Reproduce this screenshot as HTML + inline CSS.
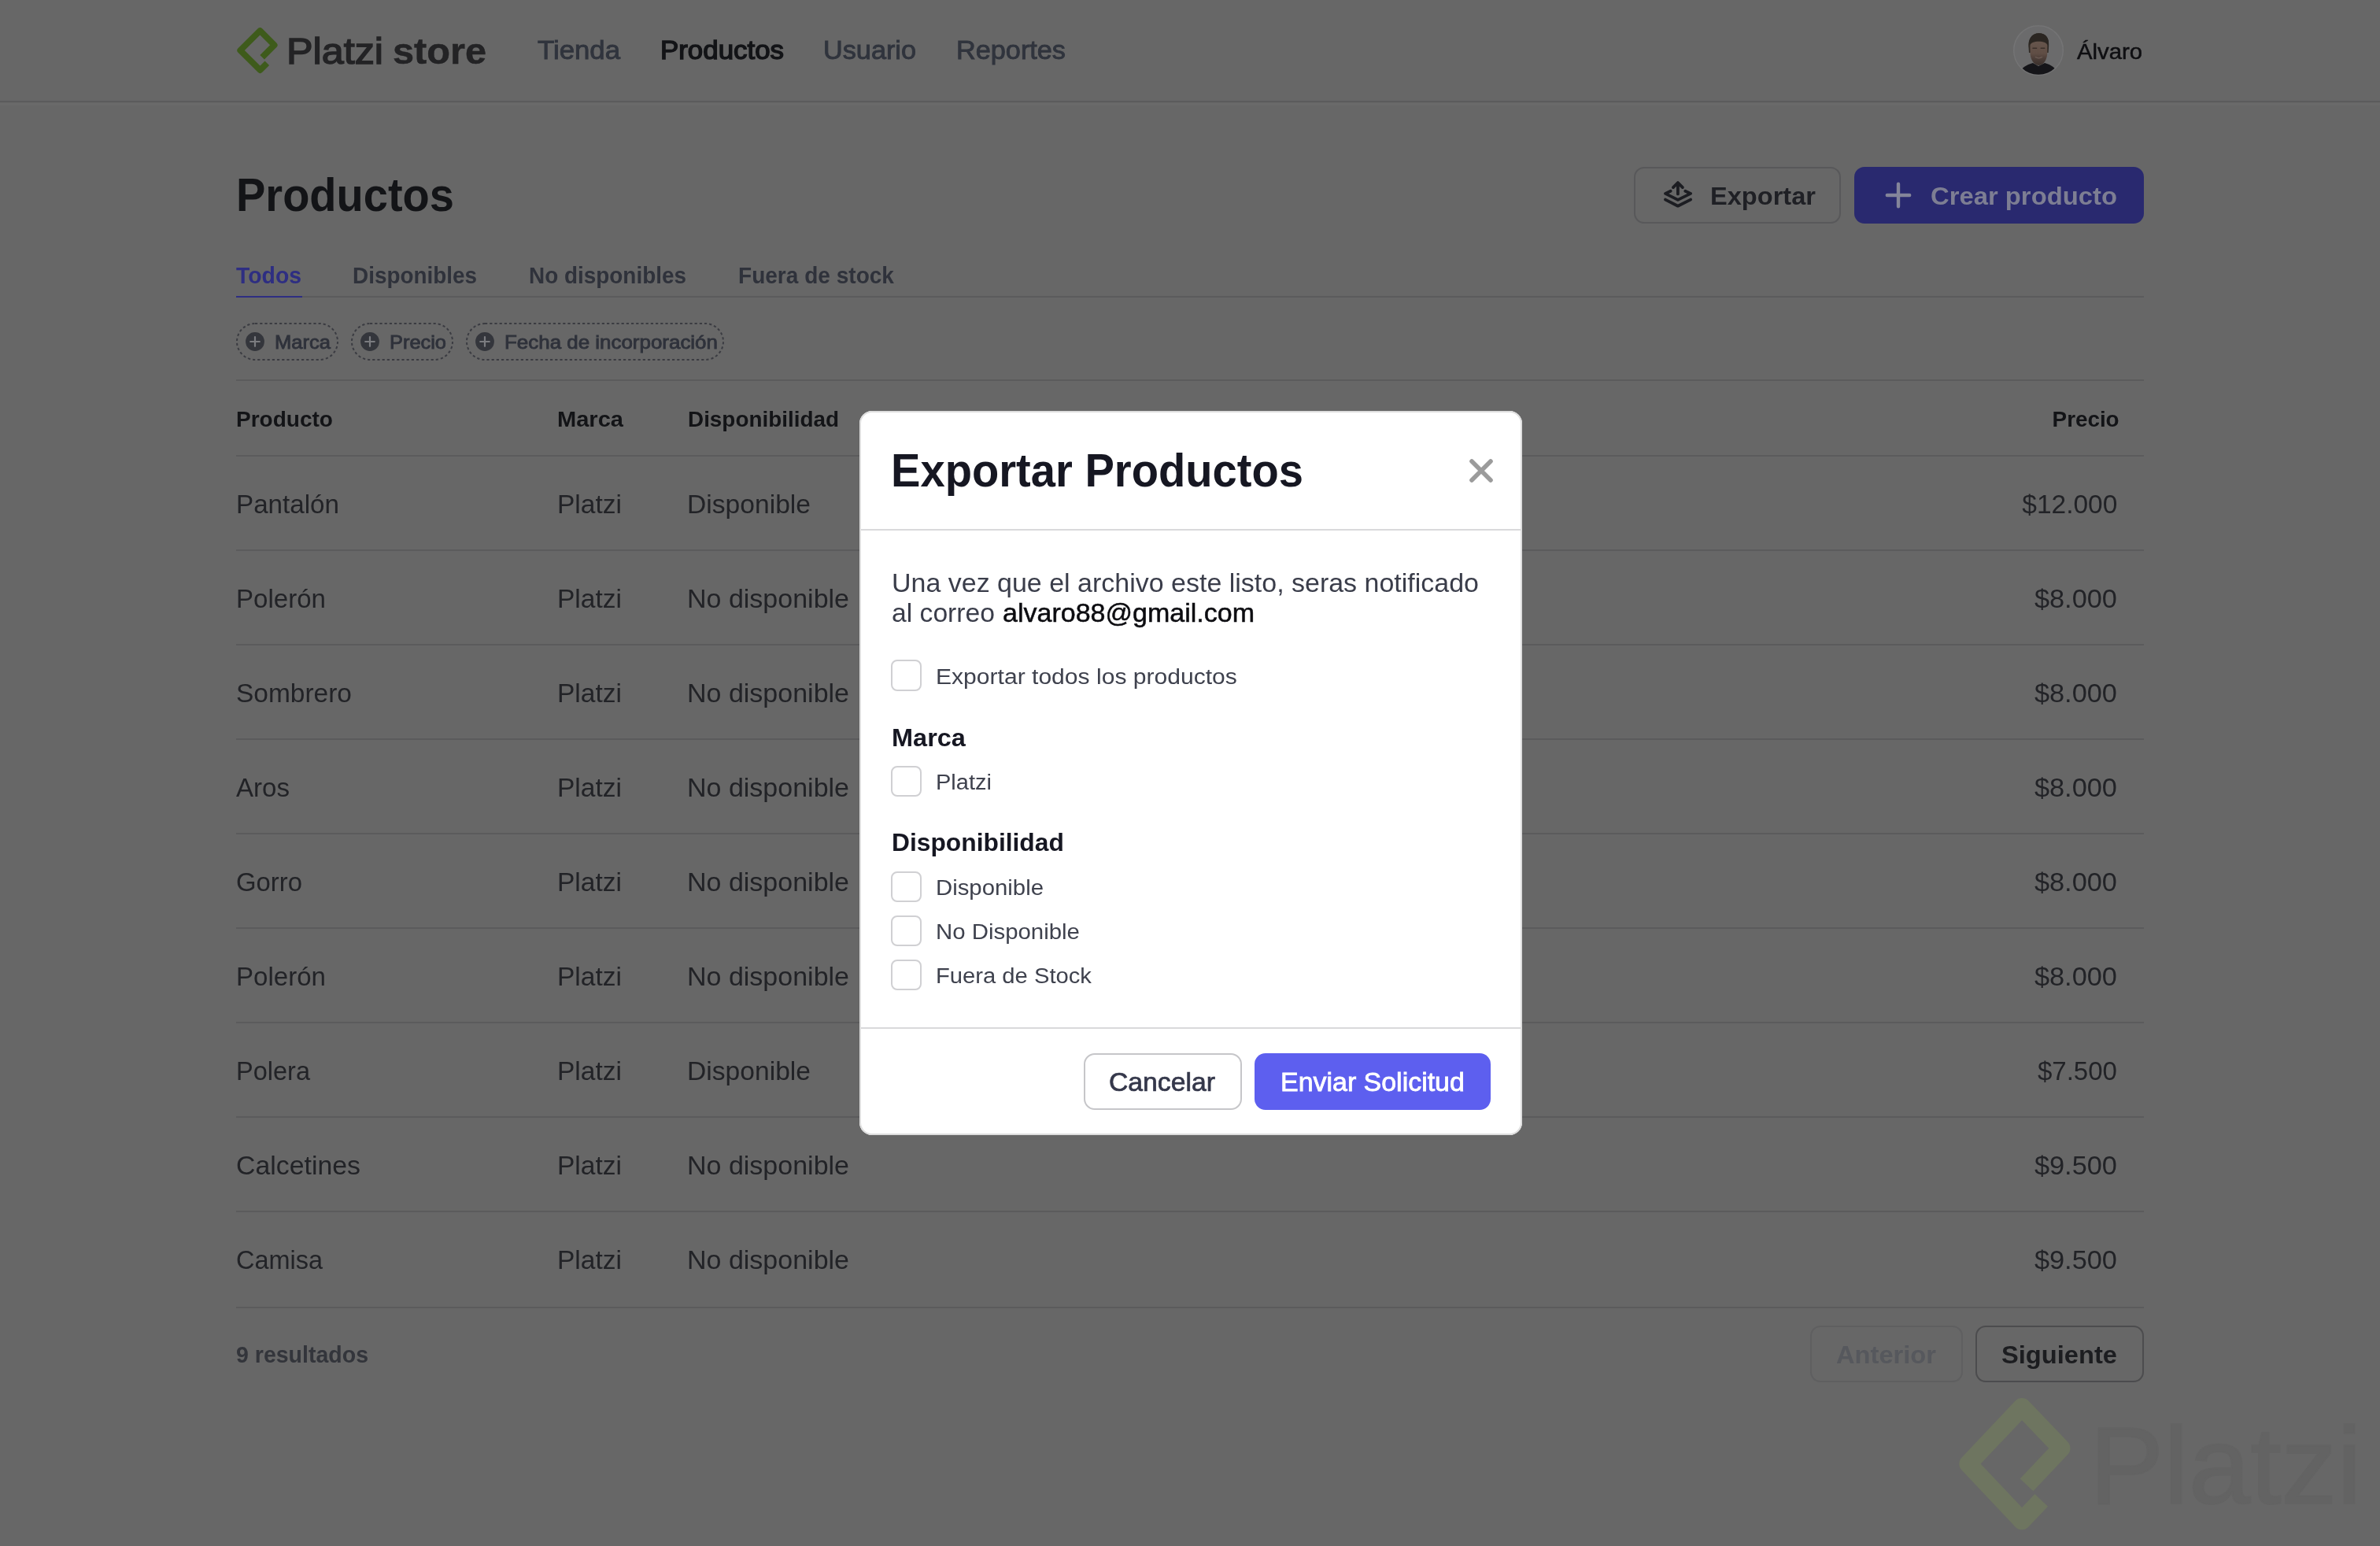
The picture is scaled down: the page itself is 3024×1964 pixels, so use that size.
<!DOCTYPE html>
<html lang="es"><head><meta charset="utf-8"><title>Platzi store - Productos</title>
<style>
html,body{margin:0;padding:0;}
body{width:3024px;height:1964px;background:#676767;position:relative;overflow:hidden;font-family:"Liberation Sans",sans-serif;}
.t{position:absolute;white-space:nowrap;display:block;}
.b{position:absolute;display:block;}
#root{position:absolute;left:0;top:0;width:3024px;height:1964px;will-change:transform;}
</style></head><body><div id="root">
<div class="b" style="left:0px;top:128px;width:3024px;height:2px;background:#5b5b5c;"></div>
<div class="b" style="left:0px;top:130.5px;width:3024px;height:3.5px;background:#6a6a6a;"></div>
<svg class="b" style="left:290px;top:25px" width="80" height="80" viewBox="290 25 80 80">
<path d="M333.1 72.8 L348.6 57.3 L330.4 39.1 L305.3 64 L330.5 89.1 L339.3 80.3" fill="none" stroke="#3e5b1b" stroke-width="7.8" stroke-linejoin="round"/></svg>
<span class="t" style="font-size:47px;line-height:47px;top:41.00px;color:#232325;-webkit-text-stroke:1.5px #232325;left:363.50px;transform:scaleX(1.0702);transform-origin:0 50%;">Platzi</span>
<span class="t" style="font-size:47px;line-height:47px;top:41.00px;color:#232325;font-weight:700;-webkit-text-stroke:0.5px #232325;left:498.50px;transform:scaleX(1.0354);transform-origin:0 50%;">store</span>
<span class="t" style="font-size:33px;line-height:33px;top:47.00px;color:#30343d;-webkit-text-stroke:0.9px #30343d;left:683.00px;transform:scaleX(1.0534);transform-origin:0 50%;">Tienda</span>
<span class="t" style="font-size:33px;line-height:33px;top:47.00px;color:#131417;-webkit-text-stroke:1.4px #131417;left:839.00px;transform:scaleX(1.0567);transform-origin:0 50%;">Productos</span>
<span class="t" style="font-size:33px;line-height:33px;top:47.00px;color:#30343d;-webkit-text-stroke:0.9px #30343d;left:1046.00px;transform:scaleX(1.0377);transform-origin:0 50%;">Usuario</span>
<span class="t" style="font-size:33px;line-height:33px;top:47.00px;color:#30343d;-webkit-text-stroke:0.9px #30343d;left:1215.00px;transform:scaleX(1.0381);transform-origin:0 50%;">Reportes</span>
<svg class="b" style="left:2556px;top:30px" width="68" height="68" viewBox="0 0 68 68">
<defs><clipPath id="av"><circle cx="34" cy="34" r="30.8"/></clipPath>
<linearGradient id="fc" x1="0" y1="0" x2="0" y2="1"><stop offset="0" stop-color="#66554c"/><stop offset="0.5" stop-color="#604e45"/><stop offset="0.72" stop-color="#4c3e38"/><stop offset="1" stop-color="#3a302c"/></linearGradient></defs>
<circle cx="34" cy="34" r="31.3" fill="#6b6b6c" stroke="#747475" stroke-width="1.5"/>
<g clip-path="url(#av)">
<path d="M8 68 C10 57 18 52.5 27 50 L34 54 L42 50 C51 52.5 58 57 60 68 Z" fill="#151519"/>
<path d="M21.6 31 C20.2 17 28 12.2 34.6 12.2 C42 12.2 48.6 17 47 31 L46.6 37 L22 37 Z" fill="#2e2924"/>
<path d="M23.4 28 C23.4 21 45.4 21 45.4 28 L45.2 39 C44.2 48 39 53 34.4 53 C30 53 24.6 48 23.6 39 Z" fill="url(#fc)"/>
<path d="M22 27.5 C21.5 15 30 12 34.6 12.2 C42.5 12 48.4 17.5 46.8 27.5 C44.5 23 40 21.4 34.2 21.8 C28.5 21.6 24.5 23 22 27.5 Z" fill="#2b2622"/>
<path d="M27 31.2h4.6M37.2 31.2h4.6" stroke="#3b302b" stroke-width="1.5" stroke-linecap="round"/>
<path d="M30.2 42.6 Q34.4 45 38.6 42.6" fill="none" stroke="#6c5c55" stroke-width="1.2" stroke-linecap="round"/>
</g></svg>
<span class="t" style="font-size:27.3px;line-height:27.3px;top:52.00px;color:#0f0f12;-webkit-text-stroke:0.5px #0f0f12;left:2639.40px;transform:scaleX(1.0726);transform-origin:0 50%;">Álvaro</span>
<span class="t" style="font-size:58.6px;line-height:58.6px;top:219.01px;color:#131417;font-weight:700;left:300.00px;transform:scaleX(0.9559);transform-origin:0 50%;">Productos</span>
<div class="b" style="left:2076px;top:212px;width:263px;height:72px;border:2px solid #58585a;border-radius:13px;box-sizing:border-box;"></div>
<svg class="b" style="left:2100px;top:216px" width="64" height="64" viewBox="2100 216 64 64" fill="none" stroke="#1c1d22" stroke-width="3.8" stroke-linecap="round" stroke-linejoin="round">
<path d="M2131.9 246.4V232.4M2125.9 238.1l6-6 6 6"/><path d="M2122.6 242.7l-6.6 3.2 15.9 8 16.2-8-6.8-3.2"/><path d="M2116 253.6l15.9 8.1 16.2-8.1"/></svg>
<span class="t" style="font-size:31.6px;line-height:31.6px;top:234.00px;color:#1f2025;font-weight:700;left:2173.00px;transform:scaleX(1.0312);transform-origin:0 50%;">Exportar</span>
<div class="b" style="left:2356px;top:212px;width:368px;height:72px;background:#29296f;border-radius:13px;"></div>
<svg class="b" style="left:2392px;top:228px" width="40" height="40" viewBox="0 0 40 40" fill="none" stroke="#84859a" stroke-width="4.4" stroke-linecap="round"><path d="M20 5.8v28.4M5.8 20h28.4"/></svg>
<span class="t" style="font-size:31.6px;line-height:31.6px;top:234.00px;color:#7d7e93;font-weight:700;left:2453.00px;transform:scaleX(1.0383);transform-origin:0 50%;">Crear producto</span>
<span class="t" style="font-size:29.3px;line-height:29.3px;top:335.01px;color:#2e2e82;font-weight:700;left:300.00px;transform:scaleX(0.9684);transform-origin:0 50%;">Todos</span>
<span class="t" style="font-size:29.3px;line-height:29.3px;top:335.01px;color:#2f323b;font-weight:700;left:448.00px;transform:scaleX(0.9515);transform-origin:0 50%;">Disponibles</span>
<span class="t" style="font-size:29.3px;line-height:29.3px;top:335.01px;color:#2f323b;font-weight:700;left:672.00px;transform:scaleX(0.9524);transform-origin:0 50%;">No disponibles</span>
<span class="t" style="font-size:29.3px;line-height:29.3px;top:335.01px;color:#2f323b;font-weight:700;left:938.00px;transform:scaleX(0.9574);transform-origin:0 50%;">Fuera de stock</span>
<div class="b" style="left:300px;top:376px;width:2424px;height:2px;background:#5b5b5c;"></div>
<div class="b" style="left:300px;top:375.6px;width:84px;height:2.6px;background:#2e2e82;"></div>
<svg class="b" style="left:298px;top:408px" width="134" height="52" viewBox="0 0 134 52"><rect x="3" y="3" width="128" height="46" rx="23" ry="23" fill="none" stroke="#3b3c42" stroke-width="2" stroke-dasharray="3.2 3"/></svg>
<svg class="b" style="left:311px;top:421px" width="26" height="26" viewBox="0 0 26 26"><circle cx="13" cy="13" r="11.9" fill="#34363c"/><path d="M13 7.2v11.6M7.2 13h11.6" stroke="#7b7c80" stroke-width="2.2" stroke-linecap="round"/></svg>
<span class="t" style="font-size:24.3px;line-height:24.3px;top:423.01px;color:#2f323b;-webkit-text-stroke:0.9px #2f323b;left:348.50px;transform:scaleX(1.0516);transform-origin:0 50%;">Marca</span>
<svg class="b" style="left:444px;top:408px" width="134" height="52" viewBox="0 0 134 52"><rect x="3" y="3" width="128" height="46" rx="23" ry="23" fill="none" stroke="#3b3c42" stroke-width="2" stroke-dasharray="3.2 3"/></svg>
<svg class="b" style="left:457px;top:421px" width="26" height="26" viewBox="0 0 26 26"><circle cx="13" cy="13" r="11.9" fill="#34363c"/><path d="M13 7.2v11.6M7.2 13h11.6" stroke="#7b7c80" stroke-width="2.2" stroke-linecap="round"/></svg>
<span class="t" style="font-size:24.3px;line-height:24.3px;top:423.01px;color:#2f323b;-webkit-text-stroke:0.9px #2f323b;left:494.50px;transform:scaleX(1.0453);transform-origin:0 50%;">Precio</span>
<svg class="b" style="left:590px;top:408px" width="332" height="52" viewBox="0 0 332 52"><rect x="3" y="3" width="326" height="46" rx="23" ry="23" fill="none" stroke="#3b3c42" stroke-width="2" stroke-dasharray="3.2 3"/></svg>
<svg class="b" style="left:603px;top:421px" width="26" height="26" viewBox="0 0 26 26"><circle cx="13" cy="13" r="11.9" fill="#34363c"/><path d="M13 7.2v11.6M7.2 13h11.6" stroke="#7b7c80" stroke-width="2.2" stroke-linecap="round"/></svg>
<span class="t" style="font-size:24.3px;line-height:24.3px;top:423.01px;color:#2f323b;-webkit-text-stroke:0.9px #2f323b;left:640.50px;transform:scaleX(1.0671);transform-origin:0 50%;">Fecha de incorporación</span>
<div class="b" style="left:300px;top:482px;width:2424px;height:2px;background:#5b5b5c;"></div>
<span class="t" style="font-size:28px;line-height:28px;top:519.00px;color:#131417;font-weight:700;left:300.00px;transform:scaleX(1.0009);transform-origin:0 50%;">Producto</span>
<span class="t" style="font-size:28px;line-height:28px;top:519.00px;color:#131417;font-weight:700;left:708.00px;transform:scaleX(1.0378);transform-origin:0 50%;">Marca</span>
<span class="t" style="font-size:28px;line-height:28px;top:519.00px;color:#131417;font-weight:700;left:874.00px;transform:scaleX(0.9954);transform-origin:0 50%;">Disponibilidad</span>
<span class="t" style="font-size:28px;line-height:28px;top:519.00px;color:#131417;font-weight:700;left:2606.60px;transform:scaleX(0.9930);transform-origin:100% 50%;">Precio</span>
<div class="b" style="left:300px;top:578px;width:2424px;height:2px;background:#5b5b5c;"></div>
<span class="t" style="font-size:33px;line-height:33px;top:624.00px;color:#222327;left:300.00px;transform:scaleX(1.0056);transform-origin:0 50%;">Pantalón</span>
<span class="t" style="font-size:33px;line-height:33px;top:624.00px;color:#222327;left:708.00px;transform:scaleX(1.0162);transform-origin:0 50%;">Platzi</span>
<span class="t" style="font-size:33px;line-height:33px;top:624.00px;color:#222327;left:873.00px;transform:scaleX(1.0189);transform-origin:0 50%;">Disponible</span>
<span class="t" style="font-size:33px;line-height:33px;top:624.00px;color:#222327;left:2570.71px;transform:scaleX(1.0144);transform-origin:100% 50%;">$12.000</span>
<div class="b" style="left:300px;top:698px;width:2424px;height:2px;background:#5b5b5c;"></div>
<span class="t" style="font-size:33px;line-height:33px;top:744.00px;color:#222327;left:300.00px;transform:scaleX(1.0022);transform-origin:0 50%;">Polerón</span>
<span class="t" style="font-size:33px;line-height:33px;top:744.00px;color:#222327;left:708.00px;transform:scaleX(1.0162);transform-origin:0 50%;">Platzi</span>
<span class="t" style="font-size:33px;line-height:33px;top:744.00px;color:#222327;left:873.00px;transform:scaleX(1.0302);transform-origin:0 50%;">No disponible</span>
<span class="t" style="font-size:33px;line-height:33px;top:744.00px;color:#222327;left:2589.07px;transform:scaleX(1.0403);transform-origin:100% 50%;">$8.000</span>
<div class="b" style="left:300px;top:818px;width:2424px;height:2px;background:#5b5b5c;"></div>
<span class="t" style="font-size:33px;line-height:33px;top:864.00px;color:#222327;left:300.00px;transform:scaleX(1.0145);transform-origin:0 50%;">Sombrero</span>
<span class="t" style="font-size:33px;line-height:33px;top:864.00px;color:#222327;left:708.00px;transform:scaleX(1.0162);transform-origin:0 50%;">Platzi</span>
<span class="t" style="font-size:33px;line-height:33px;top:864.00px;color:#222327;left:873.00px;transform:scaleX(1.0302);transform-origin:0 50%;">No disponible</span>
<span class="t" style="font-size:33px;line-height:33px;top:864.00px;color:#222327;left:2589.07px;transform:scaleX(1.0403);transform-origin:100% 50%;">$8.000</span>
<div class="b" style="left:300px;top:938px;width:2424px;height:2px;background:#5b5b5c;"></div>
<span class="t" style="font-size:33px;line-height:33px;top:984.00px;color:#222327;left:300.00px;transform:scaleX(1.0022);transform-origin:0 50%;">Aros</span>
<span class="t" style="font-size:33px;line-height:33px;top:984.00px;color:#222327;left:708.00px;transform:scaleX(1.0162);transform-origin:0 50%;">Platzi</span>
<span class="t" style="font-size:33px;line-height:33px;top:984.00px;color:#222327;left:873.00px;transform:scaleX(1.0302);transform-origin:0 50%;">No disponible</span>
<span class="t" style="font-size:33px;line-height:33px;top:984.00px;color:#222327;left:2589.07px;transform:scaleX(1.0403);transform-origin:100% 50%;">$8.000</span>
<div class="b" style="left:300px;top:1058px;width:2424px;height:2px;background:#5b5b5c;"></div>
<span class="t" style="font-size:33px;line-height:33px;top:1104.00px;color:#222327;left:300.00px;transform:scaleX(0.9958);transform-origin:0 50%;">Gorro</span>
<span class="t" style="font-size:33px;line-height:33px;top:1104.00px;color:#222327;left:708.00px;transform:scaleX(1.0162);transform-origin:0 50%;">Platzi</span>
<span class="t" style="font-size:33px;line-height:33px;top:1104.00px;color:#222327;left:873.00px;transform:scaleX(1.0302);transform-origin:0 50%;">No disponible</span>
<span class="t" style="font-size:33px;line-height:33px;top:1104.00px;color:#222327;left:2589.07px;transform:scaleX(1.0403);transform-origin:100% 50%;">$8.000</span>
<div class="b" style="left:300px;top:1178px;width:2424px;height:2px;background:#5b5b5c;"></div>
<span class="t" style="font-size:33px;line-height:33px;top:1224.00px;color:#222327;left:300.00px;transform:scaleX(1.0022);transform-origin:0 50%;">Polerón</span>
<span class="t" style="font-size:33px;line-height:33px;top:1224.00px;color:#222327;left:708.00px;transform:scaleX(1.0162);transform-origin:0 50%;">Platzi</span>
<span class="t" style="font-size:33px;line-height:33px;top:1224.00px;color:#222327;left:873.00px;transform:scaleX(1.0302);transform-origin:0 50%;">No disponible</span>
<span class="t" style="font-size:33px;line-height:33px;top:1224.00px;color:#222327;left:2589.07px;transform:scaleX(1.0403);transform-origin:100% 50%;">$8.000</span>
<div class="b" style="left:300px;top:1298px;width:2424px;height:2px;background:#5b5b5c;"></div>
<span class="t" style="font-size:33px;line-height:33px;top:1344.00px;color:#222327;left:300.00px;transform:scaleX(0.9854);transform-origin:0 50%;">Polera</span>
<span class="t" style="font-size:33px;line-height:33px;top:1344.00px;color:#222327;left:708.00px;transform:scaleX(1.0162);transform-origin:0 50%;">Platzi</span>
<span class="t" style="font-size:33px;line-height:33px;top:1344.00px;color:#222327;left:873.00px;transform:scaleX(1.0189);transform-origin:0 50%;">Disponible</span>
<span class="t" style="font-size:33px;line-height:33px;top:1344.00px;color:#222327;left:2589.07px;transform:scaleX(1.0007);transform-origin:100% 50%;">$7.500</span>
<div class="b" style="left:300px;top:1418px;width:2424px;height:2px;background:#5b5b5c;"></div>
<span class="t" style="font-size:33px;line-height:33px;top:1464.00px;color:#222327;left:300.00px;transform:scaleX(1.0255);transform-origin:0 50%;">Calcetines</span>
<span class="t" style="font-size:33px;line-height:33px;top:1464.00px;color:#222327;left:708.00px;transform:scaleX(1.0162);transform-origin:0 50%;">Platzi</span>
<span class="t" style="font-size:33px;line-height:33px;top:1464.00px;color:#222327;left:873.00px;transform:scaleX(1.0302);transform-origin:0 50%;">No disponible</span>
<span class="t" style="font-size:33px;line-height:33px;top:1464.00px;color:#222327;left:2589.07px;transform:scaleX(1.0403);transform-origin:100% 50%;">$9.500</span>
<div class="b" style="left:300px;top:1538px;width:2424px;height:2px;background:#5b5b5c;"></div>
<span class="t" style="font-size:33px;line-height:33px;top:1584.00px;color:#222327;left:300.00px;transform:scaleX(0.9834);transform-origin:0 50%;">Camisa</span>
<span class="t" style="font-size:33px;line-height:33px;top:1584.00px;color:#222327;left:708.00px;transform:scaleX(1.0162);transform-origin:0 50%;">Platzi</span>
<span class="t" style="font-size:33px;line-height:33px;top:1584.00px;color:#222327;left:873.00px;transform:scaleX(1.0302);transform-origin:0 50%;">No disponible</span>
<span class="t" style="font-size:33px;line-height:33px;top:1584.00px;color:#222327;left:2589.07px;transform:scaleX(1.0403);transform-origin:100% 50%;">$9.500</span>
<div class="b" style="left:300px;top:1659.8px;width:2424px;height:2px;background:#5b5b5c;"></div>
<span class="t" style="font-size:29.5px;line-height:29.5px;top:1706.01px;color:#33353b;font-weight:700;left:300.00px;transform:scaleX(0.9667);transform-origin:0 50%;">9 resultados</span>
<div class="b" style="left:2300px;top:1684px;width:194px;height:72px;border:2px solid #5f5f60;border-radius:13px;box-sizing:border-box;"></div>
<span class="t" style="font-size:31.6px;line-height:31.6px;top:1706.00px;color:#56585d;font-weight:700;left:2333.00px;transform:scaleX(1.0334);transform-origin:0 50%;">Anterior</span>
<div class="b" style="left:2510px;top:1684px;width:214px;height:72px;border:2px solid #4c4c4e;border-radius:13px;box-sizing:border-box;"></div>
<span class="t" style="font-size:31.6px;line-height:31.6px;top:1706.00px;color:#1c1d20;font-weight:700;left:2543.00px;transform:scaleX(1.0336);transform-origin:0 50%;">Siguiente</span>
<svg class="b" style="left:2470px;top:1760px" width="200" height="200" viewBox="2470 1760 200 200">
<path d="M2575 1886.3 L2619 1839.8 L2569 1787.5 L2500.8 1859.6 L2569 1931.8 L2593.7 1905.9" fill="none" stroke="#6e7560" stroke-width="23" stroke-linejoin="round"/></svg>
<span class="t" style="font-size:139.5px;line-height:139.5px;top:1793.00px;color:#636363;-webkit-text-stroke:2px #636363;left:2654.60px;transform:scaleX(1.0134);transform-origin:0 50%;">Platzi</span>
<div class="b" style="left:1092px;top:521.7px;width:842px;height:920.4px;background:#fff;border-radius:16px;box-shadow:0 0 0 2px #dedede inset;"></div>
<span class="t" style="font-size:59px;line-height:59px;top:569.01px;color:#161722;font-weight:700;left:1132.00px;transform:scaleX(0.9514);transform-origin:0 50%;">Exportar Productos</span>
<svg class="b" style="left:1862px;top:578px" width="40" height="40" viewBox="1862 578 40 40"><path d="M1870 586 L1894 610 M1894 586 L1870 610" stroke="#9b9b9b" stroke-width="5.6" stroke-linecap="round"/></svg>
<div class="b" style="left:1094px;top:671.8px;width:838px;height:2px;background:#d9d9db;"></div>
<span class="t" style="font-size:33px;line-height:33px;top:724.00px;color:#3a3d4a;left:1133.00px;transform:scaleX(1.0296);transform-origin:0 50%;">Una vez que el archivo este listo, seras notificado</span>
<span class="t" style="font-size:33px;line-height:33px;top:762.00px;color:#3a3d4a;left:1133.00px;transform:scaleX(1.0203);transform-origin:0 50%;">al correo</span>
<span class="t" style="font-size:33px;line-height:33px;top:762.00px;color:#0c0c10;-webkit-text-stroke:0.5px #0c0c10;left:1274.00px;transform:scaleX(1.0307);transform-origin:0 50%;">alvaro88@gmail.com</span>
<div class="b" style="left:1132.2px;top:838.3px;width:39.3px;height:39.3px;border:2.4px solid #d0d0d3;border-radius:8px;box-sizing:border-box;background:#fff;"></div>
<span class="t" style="font-size:28.4px;line-height:28.4px;top:845.01px;color:#3f424e;left:1189.00px;transform:scaleX(1.0595);transform-origin:0 50%;">Exportar todos los productos</span>
<span class="t" style="font-size:32.1px;line-height:32.1px;top:921.01px;color:#161722;font-weight:700;left:1133.00px;transform:scaleX(1.0130);transform-origin:0 50%;">Marca</span>
<div class="b" style="left:1132.2px;top:972.5px;width:39.3px;height:39.3px;border:2.4px solid #d0d0d3;border-radius:8px;box-sizing:border-box;background:#fff;"></div>
<span class="t" style="font-size:28.4px;line-height:28.4px;top:979.01px;color:#3f424e;left:1189.00px;transform:scaleX(1.0224);transform-origin:0 50%;">Platzi</span>
<span class="t" style="font-size:32.1px;line-height:32.1px;top:1054.01px;color:#161722;font-weight:700;left:1133.00px;transform:scaleX(0.9904);transform-origin:0 50%;">Disponibilidad</span>
<div class="b" style="left:1132.2px;top:1107px;width:39.3px;height:39.3px;border:2.4px solid #d0d0d3;border-radius:8px;box-sizing:border-box;background:#fff;"></div>
<span class="t" style="font-size:28.4px;line-height:28.4px;top:1113.01px;color:#3f424e;left:1189.00px;transform:scaleX(1.0331);transform-origin:0 50%;">Disponible</span>
<div class="b" style="left:1132.2px;top:1163px;width:39.3px;height:39.3px;border:2.4px solid #d0d0d3;border-radius:8px;box-sizing:border-box;background:#fff;"></div>
<span class="t" style="font-size:28.4px;line-height:28.4px;top:1169.01px;color:#3f424e;left:1189.00px;transform:scaleX(1.0350);transform-origin:0 50%;">No Disponible</span>
<div class="b" style="left:1132.2px;top:1219px;width:39.3px;height:39.3px;border:2.4px solid #d0d0d3;border-radius:8px;box-sizing:border-box;background:#fff;"></div>
<span class="t" style="font-size:28.4px;line-height:28.4px;top:1225.01px;color:#3f424e;left:1189.00px;transform:scaleX(1.0281);transform-origin:0 50%;">Fuera de Stock</span>
<div class="b" style="left:1094px;top:1305.3px;width:838px;height:2px;background:#d9d9db;"></div>
<div class="b" style="left:1376.5px;top:1338px;width:201.3px;height:71.6px;border:2px solid #c6c6c9;border-radius:14px;box-sizing:border-box;background:#fff;"></div>
<span class="t" style="font-size:32.6px;line-height:32.6px;top:1359.01px;color:#34374a;-webkit-text-stroke:0.7px #34374a;left:1409.00px;transform:scaleX(1.0348);transform-origin:0 50%;">Cancelar</span>
<div class="b" style="left:1594px;top:1338px;width:300px;height:71.6px;background:#5d5fef;border-radius:14px;"></div>
<span class="t" style="font-size:32.6px;line-height:32.6px;top:1359.01px;color:#ffffff;-webkit-text-stroke:0.8px #ffffff;left:1627.00px;transform:scaleX(1.0415);transform-origin:0 50%;">Enviar Solicitud</span>
</div></body></html>
